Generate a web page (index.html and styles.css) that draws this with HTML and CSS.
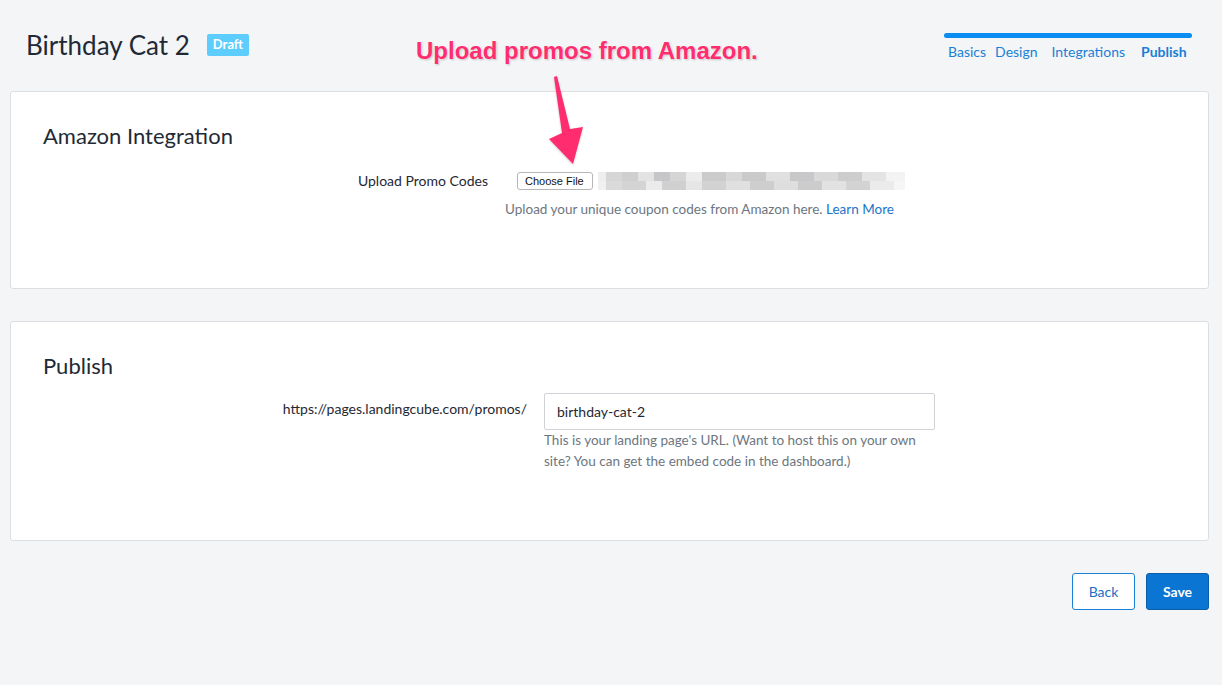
FILE: index.html
```html
<!DOCTYPE html>
<html lang="en">
<head>
  <meta charset="UTF-8" />
  <meta name="viewport" content="width=device-width, initial-scale=1.0" />
  <title>Birthday Cat 2 - Publish</title>
  <link rel="stylesheet" href="styles.css">
</head>
<body>
  <div class="page">
    <header class="top">
      <div class="title-wrap">
        <h1>Birthday Cat 2</h1>
        <span class="badge">Draft</span>
      </div>
      <nav class="steps">
        <div class="progress"></div>
        <div class="step-links">
          <a href="#" class="step">Basics</a>
          <a href="#" class="step">Design</a>
          <a href="#" class="step">Integrations</a>
          <a href="#" class="step active">Publish</a>
        </div>
      </nav>
    </header>

    <section class="card card-amazon">
      <h2>Amazon Integration</h2>
      <div class="row row-upload">
        <label class="label">Upload Promo Codes</label>
        <div class="field">
          <div class="file-line">
            <button class="file-btn">Choose File</button>
            <span class="blurred"></span>
          </div>
          <p class="help">Upload your unique coupon codes from Amazon here. <a href="#">Learn More</a></p>
        </div>
      </div>
    </section>

    <section class="card card-publish">
      <h2>Publish</h2>
      <div class="row row-url">
        <label class="label">https://pages.landingcube.com/promos/</label>
        <div class="field">
          <input class="text-input" value="birthday-cat-2">
          <p class="help">This is your landing page's URL. (Want to host this on your own site? You can get the embed code in the dashboard.)</p>
        </div>
      </div>
    </section>

    <div class="actions">
      <button class="btn btn-back">Back</button>
      <button class="btn btn-save">Save</button>
    </div>
  </div>

  <!-- screenshot annotation -->
  <div class="callout">Upload promos from Amazon.</div>
  <svg class="arrow" width="40" height="92" viewBox="0 0 40 92">
    <path d="M6 0 L9 -1 L22 52 L35 50 L25 87 L1 62 L14 56 Z" fill="#ff2d6f" transform="translate(0 2)"/>
  </svg>
</body>
</html>
```

FILE: styles.css
```css
body {
  margin: 0;
  background: #f4f5f7;
  font-family: 'Lato', 'Open Sans', sans-serif;
  color: #1f2833;
}
.page {
  padding: 0 13px 0 10px;
}
.top {
  display: flex;
  justify-content: space-between;
  align-items: flex-start;
  height: 91px;
}
.title-wrap {
  display: flex;
  align-items: center;
  padding: 30px 0 0 16px;
}
h1 {
  margin: 0;
  font-size: 26px;
  font-weight: 400;
  color: #1f2a36;
  line-height: 30px;
}
.badge {
  margin-left: 17px;
  background: #5ccdfc;
  color: white;
  font-weight: 700;
  font-size: 13px;
  padding: 2px 6px 3px;
  border-radius: 2px;
  line-height: 17px;
}
.steps {
  margin: 33px 17px 0 0;
  width: 248px;
}
.progress {
  height: 5px;
  border-radius: 3px;
  background: #0a8df2;
}
.step-links {
  display: flex;
  padding: 5px 0 0 4px;
}
.step {
  font-size: 14px;
  color: #1a7fd6;
  text-decoration: none;
}
.step:nth-child(2) { margin-left: 9px; }
.step:nth-child(3) { margin-left: 14px; }
.step:nth-child(4) { margin-left: 16px; }
.step.active {
  font-weight: 700;
}
.card {
  background: white;
  border: 1px solid #dcdee1;
  border-radius: 3px;
  padding: 0 32px;
  box-sizing: border-box;
}
.card-amazon {
  height: 198px;
  margin-bottom: 32px;
}
.card-publish {
  height: 220px;
}
h2 {
  margin: 0;
  padding-top: 31px;
  font-size: 22px;
  font-weight: 400;
  color: #1f2a36;
  line-height: 26px;
}
.row {
  display: flex;
}
.label {
  font-size: 14px;
  text-align: right;
  color: #1f2833;
}
.row-upload {
  margin-top: 14px;
}
.row-upload .label {
  width: 445px;
  padding-top: 9px;
}
.row-upload .field {
  margin-left: 17px;
}
.row-url {
  margin-top: 14px;
}
.row-url .label {
  width: 484px;
  padding-top: 7px;
}
.row-url .field {
  margin-left: 17px;
  width: 391px;
}
.file-line {
  display: flex;
  align-items: center;
  padding: 9px 0 0 12px;
}
.file-btn {
  font-family: 'Liberation Sans', sans-serif;
  font-size: 11px;
  background: white;
  border: 1px solid #b7b7b7;
  border-radius: 3px;
  padding: 1px 8px 1px 7px;
  height: 18px;
  color: #111;
}
.blurred {
  margin-left: 5px;
  width: 307px;
  height: 18px;
  background:
    linear-gradient(90deg, #eee 0 8px, #d6d6d6 8px 24px, #cfcfd0 24px 40px, #e3e3e3 40px 56px, #c6c6c8 56px 72px, #d5d5d6 72px 88px, #ececec 88px 104px, #cbcbcc 104px 128px, #d8d8d8 128px 144px, #cacaca 144px 168px, #e0e0e0 168px 192px, #c8c8ca 192px 216px, #d9d9d9 216px 240px, #cdcdcd 240px 264px, #e4e4e4 264px 288px, #f3f3f3 288px 307px) top / 100% 9px no-repeat,
    linear-gradient(90deg, #f0f0f0 0 8px, #dadada 8px 24px, #d4d4d4 24px 48px, #ebebeb 48px 64px, #d0d0d0 64px 88px, #e6e6e6 88px 104px, #d2d2d2 104px 128px, #e0e0e0 128px 152px, #cecece 152px 176px, #dedede 176px 200px, #cccccc 200px 224px, #e2e2e2 224px 248px, #d3d3d3 248px 272px, #ebebeb 272px 296px, #f6f6f6 296px 307px) bottom / 100% 9px no-repeat;
}
.help {
  margin: 0;
  font-size: 13.5px;
  color: #6d7680;
  line-height: 21px;
}
.row-upload .help {
  margin-top: 9px;
}
.help a {
  color: #1a74cc;
  text-decoration: none;
}
.text-input {
  display: block;
  width: 100%;
  height: 37px;
  box-sizing: border-box;
  border: 1px solid #cfd3d7;
  border-radius: 2px;
  padding: 0 12px;
  font-family: 'Lato', sans-serif;
  font-size: 14px;
  color: #1f2833;
}
.row-url .help {
  margin-top: 0;
}
.actions {
  display: flex;
  justify-content: flex-end;
  gap: 11px;
  margin-top: 32px;
}
.btn {
  height: 37px;
  border-radius: 3px;
  font-family: 'Lato', sans-serif;
  font-size: 14px;
  cursor: pointer;
}
.btn-back {
  width: 63px;
  background: white;
  border: 1px solid #1a7fd6;
  color: #1a6fc4;
}
.btn-save {
  width: 63px;
  background: #0a75d2;
  border: 1px solid #0a5fa8;
  color: white;
  font-weight: 700;
}
.callout {
  position: absolute;
  left: 416px;
  top: 37px;
  font-family: 'Liberation Sans', Arial, sans-serif;
  font-weight: 700;
  font-size: 24px;
  color: #ff2d6f;
  text-shadow: 0 0 2px white, 1px 1px 2px rgba(0,0,0,0.25);
}
.arrow {
  position: absolute;
  left: 548px;
  top: 75px;
  filter: drop-shadow(0 1px 1px rgba(0,0,0,0.2));
}
```
